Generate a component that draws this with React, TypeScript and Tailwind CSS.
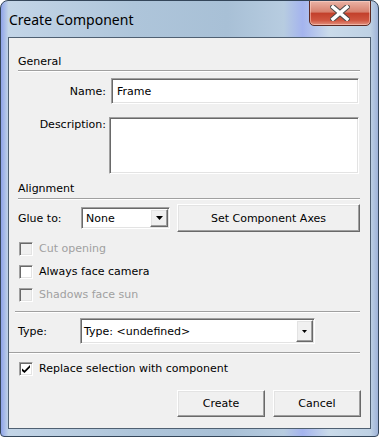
import React from "react";

const sunken =
    "border border-t-[#a0a0a0] border-l-[#a0a0a0] border-r-white border-b-white shadow-[inset_1px_1px_0_#696969,inset_-1px_-1px_0_#e3e3e3] bg-white";
const raised =
    "border border-t-white border-l-white border-r-[#696969] border-b-[#696969] shadow-[inset_-1px_-1px_0_#a0a0a0,inset_1px_1px_0_#e3e3e3] bg-[#f0f0f0]";

const Separator = ({ className = "" }: { className?: string }) => (
    <div className={`h-[2px] border-t border-t-[#a0a0a0] border-b border-b-white ${className}`} />
);

const Arrow = ({ big }: { big?: boolean }) => (
    <svg width={big ? 7 : 5} height={big ? 4 : 3} viewBox={big ? "0 0 7 4" : "0 0 5 3"}>
        <polygon points={big ? "0,0 7,0 3.5,4" : "0,0 5,0 2.5,3"} fill="#000" />
    </svg>
);

const Checkbox = ({
    label,
    checked,
    disabled
}: {
    label: string;
    checked?: boolean;
    disabled?: boolean;
}) => (
    <div className="h-[23px] flex items-center">
        <div
            className={`ml-px w-[14px] h-[14px] flex items-center justify-center border border-t-[#a0a0a0] border-l-[#a0a0a0] border-r-white border-b-white shadow-[inset_1px_1px_0_#696969,inset_-1px_-1px_0_#e3e3e3] ${disabled ? "bg-[#f0f0f0]" : "bg-white"}`}
        >
            {checked && (
                <svg width="8" height="8" viewBox="0 0 8 8">
                    <path d="M0 3.5 L0 6 L2.5 8 L8 2.5 L8 0 L2.5 5.5 Z" fill="#000" />
                </svg>
            )}
        </div>
        <span className={`ml-[6px] ${disabled ? "text-[#a0a0a0]" : "text-black"}`}>{label}</span>
    </div>
);

export default function App() {
    return (
        <div className="w-[379px] h-[437px] flex flex-col rounded-t-[8px] rounded-b-[4px] border border-[#34465a] bg-[linear-gradient(90deg,#8fa4ea_0%,#c3d5e7_2%,#aec5da_35%,#a8c0d6_60%,#b7cce0_75%,#a4b4ee_80%,#cadbea_87%,#bed1e4_98%,#9fb3d8_100%)] overflow-hidden"
            style={{ fontFamily: '"DejaVu Sans", sans-serif' }}
        >
            {/* title bar */}
            <div className="h-[36px] flex items-start shrink-0">
                <span
                    className="pl-[8px] pt-[9px] text-[14px] leading-[20px] text-black"
                    style={{ fontFamily: '"Noto Sans", sans-serif' }}
                >
                    Create Component
                </span>
                <div className="ml-auto mr-[7px] -mt-px w-[62px] h-[26px] rounded-b-[5px] border border-[#5e2a22] bg-[linear-gradient(180deg,#eab3a6_0%,#d7826f_45%,#c3412c_52%,#cf553f_80%,#e2917d_100%)] shadow-[inset_0_0_0_1px_rgba(255,220,210,0.5)] flex items-center justify-center">
                    <svg width="20" height="16" viewBox="0 0 20 16">
                        <path
                            d="M3 2 L17 14 M17 2 L3 14"
                            stroke="#4a4a4a"
                            strokeWidth="5.5"
                            strokeLinecap="square"
                        />
                        <path
                            d="M3 2 L17 14 M17 2 L3 14"
                            stroke="#ffffff"
                            strokeWidth="3.5"
                            strokeLinecap="square"
                        />
                    </svg>
                </div>
            </div>

            {/* client area */}
            <div className="mx-[7px] h-[392px] shrink-0 border border-[#4f6072] bg-[#f0f0f0] pl-[9px] pr-[10px] pt-[17px] flex flex-col text-[11px] leading-[13px] text-black">
                <div className="h-[13px]">General</div>
                <Separator className="mt-[2px]" />

                <div className="mt-[6px] h-[26px] flex items-center">
                    <span className="w-[88px] text-right">Name:</span>
                    <div className={`ml-[5px] w-[248px] h-[26px] ${sunken} flex items-center pl-[5px]`}>
                        Frame
                    </div>
                </div>

                <div className="mt-[13px] h-[57px] flex items-start">
                    <span className="w-[88px] text-right pt-px">Description:</span>
                    <div className={`ml-[3px] w-[250px] h-[57px] ${sunken}`} />
                </div>

                <div className="mt-[8px] h-[13px]">Alignment</div>
                <Separator className="mt-[3px]" />

                <div className="mt-[4px] h-[28px] flex items-center">
                    <span className="w-[63px]">Glue to:</span>
                    <div className={`w-[89px] h-[22px] ${sunken} p-px flex items-center`}>
                        <span className="flex-1 pl-[3px]">None</span>
                        <div className={`w-[18px] h-[18px] ${raised} flex items-center justify-center`}>
                            <Arrow big />
                        </div>
                    </div>
                    <div className={`ml-[7px] w-[183px] h-[28px] ${raised} flex items-center justify-center`}>
                        Set Component Axes
                    </div>
                </div>

                <div className="mt-[5px] flex flex-col">
                    <Checkbox label="Cut opening" disabled />
                    <Checkbox label="Always face camera" />
                    <Checkbox label="Shadows face sun" disabled />
                </div>

                <Separator className="mt-[5px] -ml-[3px]" />

                <div className="mt-[5px] h-[26px] flex items-center">
                    <span className="w-[62px]">Type:</span>
                    <div className={`w-[235px] h-[26px] ${sunken} p-px flex items-center`}>
                        <span className="flex-1 pl-[2px]">Type: &lt;undefined&gt;</span>
                        <div className={`w-[17px] h-[22px] ${raised} flex items-center justify-center`}>
                            <Arrow />
                        </div>
                    </div>
                </div>

                <Separator className="mt-[8px] -ml-[9px]" />

                <div className="mt-[3px]">
                    <Checkbox label="Replace selection with component" checked />
                </div>

                <div className="mt-[10px] flex justify-end gap-[8px] -mr-px">
                    <div className={`w-[88px] h-[27px] ${raised} flex items-center justify-center`}>
                        Create
                    </div>
                    <div className={`w-[88px] h-[27px] ${raised} flex items-center justify-center`}>
                        Cancel
                    </div>
                </div>
            </div>
        </div>
    );
}
